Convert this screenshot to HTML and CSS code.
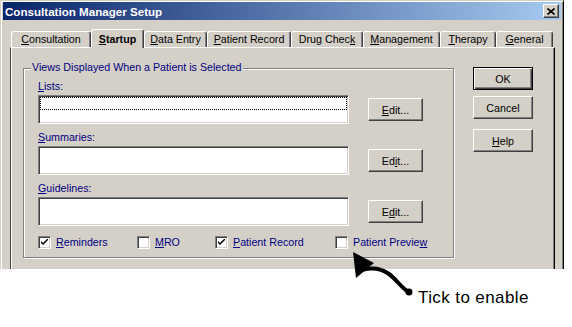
FILE: index.html
```html
<!DOCTYPE html>
<html lang="en">
<head>
    <meta charset="UTF-8">
    <title>Consultation Manager Setup</title>
    <link rel="stylesheet" href="styles.css">
</head>
<body>

<div class="screen">
    <div class="window">
        <div class="titlebar">
            <span class="title">Consultation Manager Setup</span>
            <span class="close-btn">
                <svg width="8" height="7" viewBox="0 0 8 7">
                    <path d="M0.5 0.5 L7.5 6.5 M7.5 0.5 L0.5 6.5" stroke="#000" stroke-width="1.6" fill="none"/>
                </svg>
            </span>
        </div>

        <div class="tabs">
            <span class="tab tab-consultation"><u>C</u>onsultation</span>
            <span class="tab tab-startup active"><u>S</u>tartup</span>
            <span class="tab tab-data"><u>D</u>ata Entry</span>
            <span class="tab tab-record"><u>P</u>atient Record</span>
            <span class="tab tab-drug">Drug Chec<u>k</u></span>
            <span class="tab tab-management"><u>M</u>anagement</span>
            <span class="tab tab-therapy"><u>T</u>herapy</span>
            <span class="tab tab-general"><u>G</u>eneral</span>
        </div>

        <div class="panel">
            <div class="group">
                <span class="group-title">Views Displayed When a Patient is Selected</span>

                <div class="field">
                    <div class="field-label"><u>L</u>ists:</div>
                    <div class="field-row">
                        <div class="listbox"><div class="focus-rect"></div></div>
                        <button class="btn btn-edit"><u>E</u>dit...</button>
                    </div>
                </div>

                <div class="field">
                    <div class="field-label"><u>S</u>ummaries:</div>
                    <div class="field-row">
                        <div class="listbox"></div>
                        <button class="btn btn-edit">Ed<u>i</u>t...</button>
                    </div>
                </div>

                <div class="field">
                    <div class="field-label"><u>G</u>uidelines:</div>
                    <div class="field-row">
                        <div class="listbox"></div>
                        <button class="btn btn-edit">E<u>d</u>it...</button>
                    </div>
                </div>

                <div class="checks">
                    <label class="check">
                        <span class="checkbox">
                            <svg width="7" height="7" viewBox="0 0 7 7"><path d="M0 2 L0 4 L2 6 L7 1 L7 -1 L2 4 Z" fill="#000"/></svg>
                        </span>
                        <span><u>R</u>eminders</span>
                    </label>
                    <label class="check">
                        <span class="checkbox"></span>
                        <span><u>M</u>RO</span>
                    </label>
                    <label class="check">
                        <span class="checkbox">
                            <svg width="7" height="7" viewBox="0 0 7 7"><path d="M0 2 L0 4 L2 6 L7 1 L7 -1 L2 4 Z" fill="#000"/></svg>
                        </span>
                        <span><u>P</u>atient Record</span>
                    </label>
                    <label class="check">
                        <span class="checkbox"></span>
                        <span>Patient Previe<u>w</u></span>
                    </label>
                </div>
            </div>

            <div class="side-buttons">
                <button class="btn btn-default">OK</button>
                <button class="btn">Cancel</button>
                <button class="btn btn-help"><u>H</u>elp</button>
            </div>
        </div>
    </div>

    <p class="note">Tick to enable</p>

    <!-- callout arrow pointing at the Patient Preview box -->
    <svg class="callout" width="572" height="327" viewBox="0 0 572 327">
        <polygon points="353,252 356,278 374,263" fill="#000"/>
        <path d="M362 270 C372 267, 382 269, 389 274 C396 279, 400 286, 407 291" stroke="#000" stroke-width="4" fill="none" stroke-linecap="round"/>
        <circle cx="409" cy="292" r="3.5" fill="#000"/>
    </svg>
</div>

</body>
</html>
```

FILE: styles.css
```css
body {
    margin: 0;
    padding: 0;
    background-color: #ffffff;
    font-family: "Liberation Sans", Arial, sans-serif;
    font-size: 10.7px;
}

.screen {
    position: relative;
    width: 572px;
    height: 327px;
    overflow: hidden;
}

.window {
    box-sizing: border-box;
    width: 564px;
    height: 269px;
    background-color: #d4d0c8;
    border-top: 1px solid #d4d0c8;
    border-left: 1px solid #d4d0c8;
    border-right: 1px solid #000000;
    box-shadow: inset 1px 1px 0 #ffffff, inset -1px 0 0 #808080;
    padding: 1px 2px 0 2px;
    display: flex;
    flex-direction: column;
    overflow: hidden;
}

.titlebar {
    height: 18px;
    display: flex;
    align-items: center;
    justify-content: space-between;
    padding: 0 2px;
    background: linear-gradient(to right, #0a246a, #a6caf0);
}

.title {
    color: #ffffff;
    font-weight: bold;
    font-size: 11.6px;
}

.close-btn {
    box-sizing: border-box;
    width: 16px;
    height: 14px;
    display: flex;
    align-items: center;
    justify-content: center;
    background-color: #d4d0c8;
    border: 1px solid;
    border-color: #ffffff #404040 #404040 #ffffff;
    box-shadow: inset -1px -1px 0 #808080;
}

.close-btn svg {
    display: block;
    margin-top: 1px;
}

.tabs {
    display: flex;
    align-items: flex-end;
    margin-top: 9px;
    padding-left: 8px;
}

.tab {
    box-sizing: border-box;
    height: 16px;
    padding-top: 1px;
    line-height: 13px;
    text-align: center;
    color: #000000;
    background-color: #d4d0c8;
    border-top: 1px solid #ffffff;
    border-left: 1px solid #ffffff;
    border-right: 1px solid #404040;
    border-radius: 3px 3px 0 0;
    box-shadow: inset -1px 0 0 #808080;
}

.tab.active {
    position: relative;
    z-index: 1;
    height: 19px;
    margin-bottom: -1px;
    padding-top: 3px;
    font-weight: bold;
}

.tab-consultation { width: 80px; }
.tab-startup { width: 53px; }
.tab-data { width: 63px; }
.tab-record { width: 84px; }
.tab-drug { width: 72px; }
.tab-management { width: 77px; }
.tab-therapy { width: 56px; }
.tab-general { width: 57px; }

.panel {
    box-sizing: border-box;
    width: 545px;
    flex: 1;
    margin-left: 7px;
    display: flex;
    align-items: flex-start;
    gap: 19px;
    padding: 19px 21px 0 12px;
    border-top: 1px solid #ffffff;
    border-left: 1px solid #404040;
    border-right: 1px solid #000000;
    box-shadow: inset 1px 0 0 #ffffff, inset -1px 0 0 #808080;
}

.group {
    position: relative;
    box-sizing: border-box;
    width: 431px;
    margin-top: 1px;
    padding: 11px 0 8px 14px;
    border: 1px solid #808080;
    box-shadow: inset 1px 1px 0 #ffffff, 1px 1px 0 #ffffff;
    color: #000080;
}

.group-title {
    position: absolute;
    top: -8px;
    left: 7px;
    padding: 0 1px;
    line-height: 13px;
    background-color: #d4d0c8;
}

.field + .field {
    margin-top: 7px;
}

.field-label {
    line-height: 13px;
    margin-bottom: 2px;
}

.field-row {
    display: flex;
    align-items: center;
    gap: 19px;
}

.listbox {
    box-sizing: border-box;
    width: 311px;
    height: 29px;
    background-color: #ffffff;
    border: 1px solid;
    border-color: #808080 #ffffff #ffffff #808080;
    box-shadow: inset 1px 1px 0 #404040, inset -1px -1px 0 #d4d0c8;
    padding: 1px;
}

.focus-rect {
    box-sizing: border-box;
    height: 13px;
    border: 1px dotted #000000;
}

.btn {
    box-sizing: border-box;
    height: 23px;
    padding: 0;
    font-family: inherit;
    font-size: inherit;
    color: #000000;
    background-color: #d4d0c8;
    border: 1px solid;
    border-color: #ffffff #404040 #404040 #ffffff;
    box-shadow: inset -1px -1px 0 #808080;
}

.btn-edit {
    width: 55px;
}

.side-buttons {
    display: flex;
    flex-direction: column;
    gap: 6px;
    width: 60px;
}

.side-buttons .btn {
    width: 60px;
}

.btn-default {
    border-color: #000000;
    box-shadow: inset 1px 1px 0 #ffffff, inset -1px -1px 0 #404040, inset -2px -2px 0 #808080;
}

.btn-help {
    margin-top: 4px;
}

.checks {
    display: grid;
    grid-template-columns: 99px 78px 120px auto;
    margin-top: 10px;
}

.check {
    display: flex;
    align-items: center;
    gap: 5px;
    height: 13px;
    line-height: 13px;
}

.checkbox {
    box-sizing: border-box;
    width: 13px;
    height: 13px;
    display: flex;
    align-items: center;
    justify-content: center;
    background-color: #ffffff;
    border: 1px solid;
    border-color: #808080 #ffffff #ffffff #808080;
    box-shadow: inset 1px 1px 0 #404040, inset -1px -1px 0 #d4d0c8;
}

.checkbox svg {
    display: block;
}

.note {
    margin: 19px 0 0 0;
    padding-left: 418px;
    font-size: 17px;
    line-height: 20px;
    letter-spacing: 0.4px;
    color: #000000;
}

.callout {
    position: absolute;
    left: 0;
    top: 0;
    pointer-events: none;
}
```
